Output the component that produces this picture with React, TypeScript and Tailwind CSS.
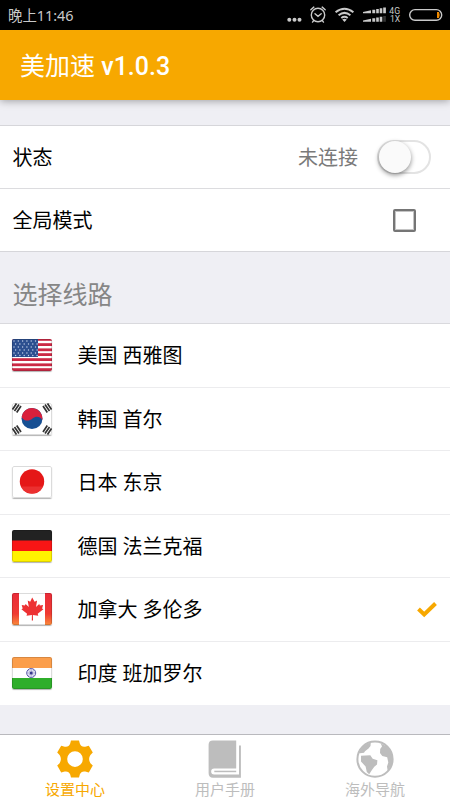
import { useState } from "react";
import type { ReactNode } from "react";

const Flag = ({ children }: { children: ReactNode }) => (
  <svg
    viewBox="0 0 40 32"
    className="w-10 h-8 shrink-0 rounded-[2px] shadow-[0_1px_1px_rgba(0,0,0,0.3)]"
  >
    {children}
    <rect
      x="0.5"
      y="0.5"
      width="39"
      height="31"
      rx="1.5"
      fill="none"
      stroke="#000"
      strokeOpacity="0.14"
    />
  </svg>
);

const UsaFlag = () => (
  <Flag>
    <rect width="40" height="32" fill="#fff" />
    {[-1, 4.2, 9.4, 14.2, 19.2, 24.4, 29.2].map((y) => (
      <rect key={y} y={y} width="40" height="2.8" fill="#cb2945" />
    ))}
    <rect width="26" height="18" fill="#2c4f8f" />
    {[2, 5, 8, 11, 14, 16.5].map((y, row) =>
      [2, 6.3, 10.6, 14.9, 19.2, 23.5].map((x) => (
        <circle
          key={`${x}-${y}`}
          cx={row % 2 ? x + 1.6 : x}
          cy={y}
          r="0.7"
          fill="#c3d0e8"
        />
      ))
    )}
  </Flag>
);

const KoreaFlag = () => (
  <Flag>
    <rect width="40" height="32" fill="#fff" />
    <g stroke="#333" strokeWidth="1.7">
      <path d="M0.5 6.5L4.5 0.5M2.5 8L7 1.5M4.7 9.5L9 3" />
      <path d="M35.5 0.5L39.5 6.5M33 1.5L37.5 8M31 3L35.3 9.5" />
      <path d="M0.5 25.5L4.5 31.5M2.5 24L7 30.5M4.7 22.5L9 29" />
      <path d="M35.5 31.5L39.5 25.5M33 30.5L37.5 24M31 29L35.3 22.5" />
    </g>
    <circle cx="20" cy="15.5" r="10.5" fill="#164f93" />
    <path
      d="M9.6 14A10.5 10.5 0 0 1 30.4 17.2C28.5 13.3 24 12.5 20.5 15.5C17 18.5 12 18.5 9.6 14Z"
      fill="#d9203c"
    />
  </Flag>
);

const JapanFlag = () => (
  <Flag>
    <rect width="40" height="32" fill="#fff" />
    <circle cx="20" cy="15.5" r="12.2" fill="#e51717" />
    <path d="M9 20.5h22a12.2 12.2 0 0 1-22 0z" fill="#ef4141" opacity="0.6" />
  </Flag>
);

const GermanyFlag = () => (
  <Flag>
    <rect width="40" height="11" fill="#222" />
    <rect y="10.5" width="40" height="11" fill="#f81515" />
    <rect y="21" width="40" height="11" fill="#fff200" />
  </Flag>
);

const CanadaFlag = () => (
  <Flag>
    <defs>
      <linearGradient id="canada" x1="0" y1="0" x2="0" y2="1">
        <stop offset="0" stopColor="#e92c3a" />
        <stop offset="0.65" stopColor="#f03a32" />
        <stop offset="1" stopColor="#f98a3c" />
      </linearGradient>
    </defs>
    <rect width="40" height="32" fill="#fff" />
    <rect width="7" height="32" fill="url(#canada)" />
    <rect x="33" width="7" height="32" fill="url(#canada)" />
    <path
      d="M20.2 4.5l2.4 4.3 2.5-1.2-1.1 6.5 3.2-3.2.7 1.7 3.2-.5-1 3.3 1.3.8-5.7 4.6.6 2-5.4-.8.1 5.5h-1.2l.1-5.5-5.4.8.6-2-5.7-4.6 1.3-.8-1-3.3 3.2.5.7-1.7 3.2 3.2-1.1-6.5 2.5 1.2z"
      fill="#ed3133"
    />
  </Flag>
);

const IndiaFlag = () => (
  <Flag>
    <rect width="40" height="32" fill="#fff" />
    <rect width="40" height="11" fill="#fb9e4b" />
    <rect y="21" width="40" height="11" fill="#2fae2b" />
    <circle
      cx="19.2"
      cy="16"
      r="4.5"
      fill="#e4e4f3"
      stroke="#5a5aa8"
      strokeWidth="1"
    />
    <path
      d="M19.2 12v8M15.2 16h8M16.4 13.2l5.6 5.6M22 13.2l-5.6 5.6"
      stroke="#7b7bbb"
      strokeWidth="0.5"
    />
    <circle cx="19.2" cy="16" r="1.5" fill="#38388f" />
  </Flag>
);

const routes = [
  { id: "us", name: "美国 西雅图", flag: <UsaFlag /> },
  { id: "kr", name: "韩国 首尔", flag: <KoreaFlag /> },
  { id: "jp", name: "日本 东京", flag: <JapanFlag /> },
  { id: "de", name: "德国 法兰克福", flag: <GermanyFlag /> },
  { id: "ca", name: "加拿大 多伦多", flag: <CanadaFlag /> },
  { id: "in", name: "印度 班加罗尔", flag: <IndiaFlag /> },
];

const GearIcon = () => (
  <svg viewBox="0 0 36 38" className="w-9 h-[38px]" fill="currentColor">
    <path
      fillRule="evenodd"
      d="M14 0.6H22L22.8 3.6Q24.3 7.4 28.2 6.7L31.8 5.8L35.8 12.6L33.4 15Q30.8 19.1 33.4 23.2L35.8 25.6L31.8 32.4L28.2 31.5Q24.3 30.8 22.8 34.6L22 37.6H14L13.2 34.6Q11.7 30.8 7.8 31.5L4.2 32.4L0.2 25.6L2.6 23.2Q5.2 19.1 2.6 15L0.2 12.6L4.2 5.8L7.8 6.7Q11.7 7.4 13.2 3.6ZM18 11.3a7.8 7.8 0 1 0 0 15.6 7.8 7.8 0 0 0 0-15.6z"
    />
  </svg>
);

const BookIcon = () => (
  <svg viewBox="0 0 34 38" className="w-[34px] h-[38px]" fill="currentColor">
    <path d="M4.8 0.5H28.2V28.4H6.2a3.05 3.05 0 0 0 0 6.1H31V5.5H32.9V37.8H5Q0.6 37.8 0.6 33V4.8Q0.6 0.5 4.8 0.5z" />
    <path d="M6.3 30.7H28.2v1.5H6.3z" />
  </svg>
);

const GlobeIcon = () => (
  <svg viewBox="0 0 38 38" className="w-[38px] h-[38px]" fill="currentColor">
    <circle
      cx="19"
      cy="19.2"
      r="17.6"
      fill="none"
      stroke="currentColor"
      strokeWidth="2"
    />
    <path d="M2.8 13Q6 5 14.8 2.6L14.5 6L12.5 8.5L9 11.2L8 12.8L4 13.3Z" />
    <path d="M5 15.8L14.3 15.2L16.7 18.8L21.4 20.2L21 24.6L18.3 26.8L15.6 30.5L13.2 34.3L10.8 32L9.6 26.5L5 21.5Z" />
    <path d="M24.8 3.5Q34.5 7 36.6 17L36.5 21Q35 27.5 31.5 30L31 26.5L32.3 22.5L31.2 17.2L26.3 16L24 13L24.2 9L26 6.5Z" />
  </svg>
);

const tabs = [
  { name: "设置中心", icon: <GearIcon /> },
  { name: "用户手册", icon: <BookIcon /> },
  { name: "海外导航", icon: <GlobeIcon /> },
];

const StatusBar = () => (
  <div className="h-[30px] shrink-0 flex items-center justify-between bg-black pl-2 pr-[7px] text-[#c9c9c9]">
    <span className="text-[14.4px] leading-none pt-0.5 font-['Noto_Sans','Noto_Sans_CJK_SC',sans-serif]">
      晚上11:46
    </span>
    <svg width="156" height="30" viewBox="287 0 156 30" fill="none">
      <g fill="currentColor">
        <circle cx="289.3" cy="19.7" r="2" />
        <circle cx="294.5" cy="19.7" r="2" />
        <circle cx="299.5" cy="19.7" r="2" />
      </g>
      <g stroke="currentColor" strokeWidth="1.4" strokeLinecap="round">
        <circle cx="318" cy="15" r="6.7" />
        <path d="M315 13.8l3 2.6 3.2-2.6M310.8 9.7l3-2.6M325.2 9.7l-3-2.6M313.8 20.5l-1.3 1.6M322.2 20.5l1.3 1.6" />
      </g>
      <g stroke="currentColor" strokeWidth="2">
        <path d="M335.6 12.3q8.9-7 17.8 0M338.6 15.2q5.9-4.6 11.8 0M341.3 18q3.2-2.4 6.4 0" />
      </g>
      <path d="M342.2 19.6q2.3-1.7 4.6 0l-2.3 2.4z" fill="currentColor" />
      <g fill="currentColor">
        <path d="M363 13.3V12l8-1.7v3zM372.3 13.3v-3.6h2.9v3.6zM376.2 13.3V8.9h2.6v4.4zM379.7 13.3V8.3h2.6v5zM383.2 13.3V7.5h2.7v5.8z" />
        <path d="M363 21.8v-1.3l8-1.7v3zM372.3 21.8v-3.6h2.9v3.6zM376.2 21.8v-4.4h2.6v4.4zM379.7 21.8v-5h2.6v5z" />
        <path d="M383.2 21.8V16h2.7v5.8z" opacity="0.25" />
        <text x="389.3" y="13.6" fontSize="8.6">
          4G
        </text>
        <text x="390" y="22" fontSize="8.6">
          1X
        </text>
      </g>
      <rect
        x="409.7"
        y="9.6"
        width="32"
        height="10.6"
        rx="5.3"
        stroke="currentColor"
        strokeWidth="1.4"
      />
      <path d="M437 12h2q1.3 2.8 0 6h-2z" fill="#f08a00" />
    </svg>
  </div>
);

export default function App() {
  const [connected, setConnected] = useState(false);
  const [globalMode, setGlobalMode] = useState(false);
  const [route, setRoute] = useState("ca");
  const [tab, setTab] = useState("设置中心");

  return (
    <div
      lang="zh-CN"
      className="h-[800px] w-[450px] overflow-hidden flex flex-col bg-[#efeff4] text-black font-[Roboto,'Noto_Sans_CJK_SC',sans-serif]"
    >
      <StatusBar />
      <header className="relative h-[70px] shrink-0 flex items-center bg-[#f7a800] px-5 shadow-[0_1px_8px_rgba(0,0,0,0.35)]">
        <h1 className="text-[25px] leading-none font-medium text-white pt-[3px]">
          <span className="font-normal">美加速</span> v1.0.3
        </h1>
      </header>

      <main className="flex-1 pt-[25px]">
        <section className="border-y border-[#d6d6da] bg-white text-xl">
          <div className="h-[62px] flex items-center pl-[12.5px] pr-[19px]">
            <span className="pt-0.5">状态</span>
            <span className="ml-auto pt-0.5 text-[#7a7a7a]">
              {connected ? "已连接" : "未连接"}
            </span>
            <button
              role="switch"
              aria-checked={connected}
              onClick={() => setConnected(!connected)}
              className={`ml-[19px] h-[34px] w-[54px] flex rounded-full border-2 border-[#e3e3e3] ${
                connected ? "justify-end bg-[#f7a800]" : "bg-white"
              }`}
            >
              <span className="size-8 -mt-px rounded-full bg-[#fafafa] shadow-[0_2px_5px_rgba(0,0,0,0.45)]" />
            </button>
          </div>
          <div className="h-[63px] flex items-center justify-between border-t border-[#dcdcdf] pl-[12.5px] pr-[34px]">
            <span className="pt-0.5">全局模式</span>
            <button
              role="checkbox"
              aria-checked={globalMode}
              onClick={() => setGlobalMode(!globalMode)}
              className={`size-[23px] rounded-[2px] border-2 border-[#757575] shadow-[inset_0_0_0_1px_#c4c4c4] ${
                globalMode ? "bg-[#f7a800]" : ""
              }`}
            />
          </div>
        </section>

        <h2 className="h-[71px] flex items-center pl-[12.5px] pt-[17px] text-[25px] text-[#868686]">
          选择线路
        </h2>

        <ul className="border-t border-[#d9d9dd] bg-white text-xl">
          {routes.map((item) => (
            <li
              key={item.id}
              onClick={() => setRoute(item.id)}
              className="h-[63.55px] flex items-center border-b border-[#ececee] pl-3 pr-3 last:h-[63px] last:border-b-0"
            >
              {item.flag}
              <span className="ml-[25.5px] pt-0.5">{item.name}</span>
              {route === item.id && (
                <svg viewBox="0 0 22 18" className="ml-auto w-[22px] h-[18px]">
                  <path
                    d="M2.5 9l5.7 5.5L19.5 3.5"
                    fill="none"
                    stroke="#f7a800"
                    strokeWidth="4"
                  />
                </svg>
              )}
            </li>
          ))}
        </ul>
      </main>

      <nav className="h-[66px] shrink-0 grid grid-cols-3 border-t border-[#b9b9bd] bg-white">
        {tabs.map((item) => (
          <button
            key={item.name}
            onClick={() => setTab(item.name)}
            className={`flex flex-col items-center pt-[5px] ${
              tab === item.name ? "text-[#f7a800]" : "text-[#bdbdbd]"
            }`}
          >
            {item.icon}
            <span className="text-[15px] leading-6">{item.name}</span>
          </button>
        ))}
      </nav>
    </div>
  );
}
